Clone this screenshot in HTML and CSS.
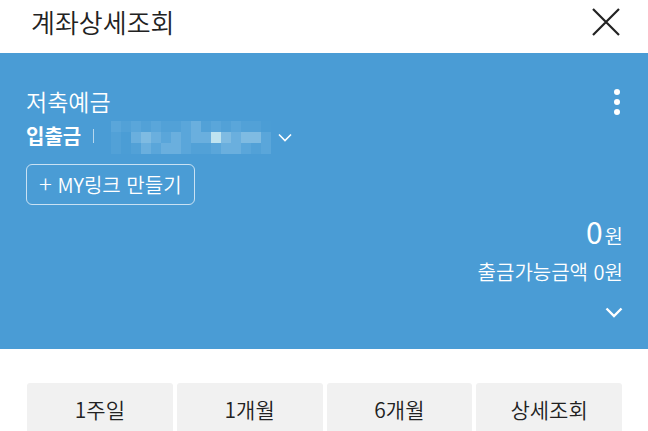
FILE: index.html
```html
<!DOCTYPE html>
<html lang="ko">
<head>
<meta charset="UTF-8">
<meta name="viewport" content="width=device-width, initial-scale=1.0">
<title>계좌상세조회</title>
<link rel="stylesheet" href="styles.css">
</head>
<body>
  <div id="header">
    <h1>계좌상세조회</h1>
    <button class="close" aria-label="닫기">
      <svg width="30" height="30" viewBox="0 0 30 30"><path d="M2 2 L28 28 M28 2 L2 28" stroke="#222" stroke-width="2.2" fill="none"/></svg>
    </button>
  </div>

  <div id="account">
    <div class="top">
      <div class="info">
        <div class="type">저축예금</div>
        <div class="kind">
          <b>입출금</b>
          <span class="bar"></span>
          <div class="mask">
            <span class="c2"></span><span class="c1"></span><span class="c2"></span><span class="c1"></span><span class="c2"></span><span class="c1"></span><span class="c1"></span><span class="c2"></span><span class="c3"></span><span class="c1"></span><span class="c2"></span><span class="c1"></span><span class="c2"></span><span class="c1"></span><span class="c1"></span><span class="c0"></span>
            <span class="c1"></span><span class="c0"></span><span class="c3"></span><span class="c4"></span><span class="c3"></span><span class="c2"></span><span class="c3"></span><span class="c2"></span><span class="c3"></span><span class="c3"></span><span class="c5"></span><span class="c4"></span><span class="c3"></span><span class="c4"></span><span class="c4"></span><span class="c2"></span>
            <span class="c1"></span><span class="c0"></span><span class="c1"></span><span class="c3"></span><span class="c2"></span><span class="c3"></span><span class="c3"></span><span class="c2"></span><span class="c1"></span><span class="c1"></span><span class="c2"></span><span class="c3"></span><span class="c3"></span><span class="c2"></span><span class="c1"></span><span class="c2"></span>
          </div>
          <svg class="caret" width="14" height="9" viewBox="0 0 14 9"><path d="M1 1.5 L7 7.5 L13 1.5" stroke="#fff" stroke-width="1.6" fill="none"/></svg>
        </div>
        <button class="mylink"><span class="plus">+</span> MY링크 만들기</button>
      </div>
      <div class="more"><i></i><i></i><i></i></div>
    </div>

    <div class="balance">
      <div class="amount"><span class="num">0</span><span class="won">원</span></div>
      <div class="avail">출금가능금액 0원</div>
      <svg class="open" width="18" height="11" viewBox="0 0 18 11"><path d="M1.5 1.5 L9 9 L16.5 1.5" stroke="#fff" stroke-width="2.4" fill="none"/></svg>
    </div>
  </div>

  <div id="periods">
    <button>1주일</button>
    <button>1개월</button>
    <button>6개월</button>
    <button>상세조회</button>
  </div>
</body>
</html>
```

FILE: styles.css
```css
body {
  font-family: "Noto Sans CJK KR", "Noto Sans", sans-serif;
  font-weight: 350;
  background-color: #fff;
  margin: 0;
  padding: 0;
  width: 648px;
  height: 431px;
  overflow: hidden;
}
#header {
  height: 53px;
  display: flex;
  align-items: center;
  justify-content: space-between;
  padding: 0 27px 0 31px;
}
#header h1 {
  margin: 0;
  font-size: 26px;
  font-weight: 350;
  color: #222;
  line-height: 30px;
  margin-top: -10px;
}
.close {
  border: none;
  background: none;
  padding: 0;
  margin-top: -10px;
  width: 30px;
  height: 30px;
}
#account {
  background-color: #4a9cd5;
  height: 296px;
  box-sizing: border-box;
  padding: 34px 25px 0 26px;
  color: #fff;
}
.top {
  display: flex;
  justify-content: space-between;
}
.type {
  font-size: 23px;
  line-height: 28px;
}
.kind {
  display: flex;
  align-items: center;
  margin-top: 8px;
  height: 26px;
}
.kind b {
  font-size: 20px;
  font-weight: bold;
  line-height: 24px;
}
.bar {
  width: 1px;
  height: 14px;
  background-color: rgba(255, 255, 255, 0.6);
  margin: 0 17px 0 12px;
}
.mask {
  display: grid;
  grid-template-columns: repeat(16, 10px);
  grid-template-rows: repeat(3, 11px);
  margin-top: 2px;
}
.mask span { display: block; }
.c0 { background-color: #4b9dd5; }
.c1 { background-color: #52a1d7; }
.c2 { background-color: #5aa6da; }
.c3 { background-color: #6aafde; }
.c4 { background-color: #7fbbe2; }
.c5 { background-color: #bfe3f0; }
.caret {
  margin-left: 7px;
  margin-top: 2px;
}
.mylink {
  margin-top: 15px;
  height: 41px;
  padding: 0 12px;
  border: 1px solid rgba(255, 255, 255, 0.7);
  border-radius: 6px;
  background: none;
  color: #fff;
  font-family: inherit;
  font-weight: 350;
  font-size: 20px;
}
.plus {
  font-size: 24px;
  font-weight: 300;
  line-height: 20px;
}
.more {
  display: flex;
  flex-direction: column;
  gap: 4px;
  margin-top: 2px;
  padding-right: 3px;
}
.more i {
  display: block;
  width: 6px;
  height: 6px;
  border-radius: 50%;
  background-color: #fff;
}
.balance {
  display: flex;
  flex-direction: column;
  align-items: flex-end;
  margin-top: 7px;
}
.amount {
  line-height: 38px;
}
.num {
  font-size: 30px;
  font-weight: normal;
}
.won {
  font-size: 20px;
  margin-left: 2px;
}
.avail {
  font-size: 20px;
  line-height: 26px;
  margin-top: 3px;
}
.open {
  margin-top: 22px;
}
#periods {
  display: flex;
  gap: 4px;
  padding: 34px 26px 0 27px;
}
#periods button {
  flex: 1;
  height: 56px;
  border: none;
  border-radius: 3px;
  background-color: #f1f1f1;
  color: #222;
  font-family: inherit;
  font-weight: 350;
  font-size: 21px;
  padding: 0 0 4px;
}
```
